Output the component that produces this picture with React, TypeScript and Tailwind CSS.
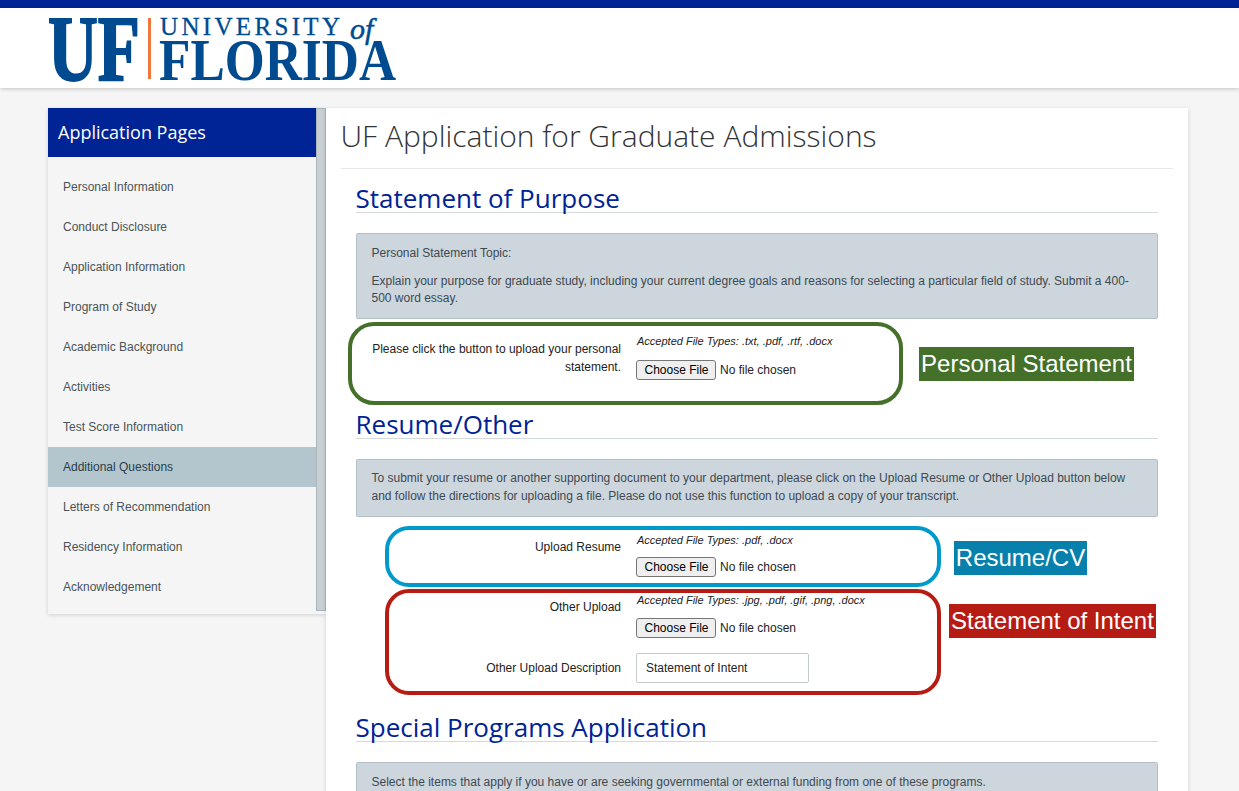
const items = ["Personal Information","Conduct Disclosure","Application Information","Program of Study","Academic Background","Activities","Test Score Information","Additional Questions","Letters of Recommendation","Residency Information","Acknowledgement"];

function Logo() {
  return (
    <svg width="350" height="68" viewBox="0 0 350 68" className="block overflow-visible">
      <text x="0" y="65" fontFamily="Liberation Serif" fontWeight="700" fontSize="94" fill="#004a8f" stroke="#004a8f" strokeWidth="2" textLength="92" lengthAdjust="spacingAndGlyphs">UF</text>
      <rect x="100" y="3" width="3" height="61" fill="#f3763c" />
      <text x="112" y="20" fontFamily="Liberation Serif" fontSize="25" fill="#004a8f" stroke="#004a8f" strokeWidth="0.3" textLength="180" lengthAdjust="spacing" fontWeight="400">UNIVERSITY</text>
      <text x="302" y="24" fontFamily="Liberation Serif" fontStyle="italic" fontWeight="400" fontSize="30" fill="#004a8f" stroke="#004a8f" strokeWidth="0.5">of</text>
      <text x="111" y="65" fontFamily="Liberation Serif" fontWeight="700" fontSize="59" fill="#004a8f" textLength="237" lengthAdjust="spacingAndGlyphs">FLORIDA</text>
    </svg>
  );
}

function Heading({ children, className }: { children: string; className: string }) {
  return <h2 className={`border-b border-[#d5dadd] font-['Open_Sans',sans-serif] text-[26px] leading-[30px] text-[#002395] -indent-[0.5px] ${className}`}>{children}</h2>;
}

function Picker() {
  return (
    <div className="flex items-center h-[20px] text-[12px] text-[#222]">
      <span className="w-[80px] h-[20px] flex items-center justify-center rounded-[3px] border border-[#767676] bg-[#efefef] pl-[1px] text-black">Choose File</span>
      <span className="ml-[4px]">No file chosen</span>
    </div>
  );
}

function Types({ children }: { children: string }) {
  return <div className="pl-[1px] text-[11px] leading-[14px] italic text-[#222]">{children}</div>;
}

function Label({ children, className }: { children: React.ReactNode; className?: string }) {
  return <div className={`w-[265px] mr-[15px] text-right text-[12px] leading-[18px] text-[#222] ${className ?? ""}`}>{children}</div>;
}

function Note({ text, bg, className }: { text: string; bg: string; className: string }) {
  return <div className={`absolute h-[34px] flex items-center justify-center text-white text-[24px] font-['Liberation_Sans',sans-serif] ${bg} ${className}`}>{text}</div>;
}

export default function App() {
  return (
    <div className="relative h-[791px] overflow-hidden bg-[#f5f5f5] font-['Liberation_Sans',Arial,sans-serif]">
      <div className="h-2 bg-[#002395]" />
      <header className="h-[80px] bg-white shadow-[0_1px_4px_rgba(0,0,0,0.2)] pl-[48px] pt-[7px]">
        <Logo />
      </header>
      <div className="flex items-start pl-[48px] pt-[20px]">
        <aside className="w-[278px] flex shadow-[0_1px_4px_rgba(0,0,0,0.15)] bg-[#f5f5f5] pb-[3px]">
          <div className="w-[268px] -mb-[3px]">
            <div className="h-[49px] bg-[#002395] pl-[10px] flex items-center text-white font-['Open_Sans',sans-serif] text-[18px]">Application Pages</div>
            <nav className="pt-[10px] pb-[7px]">
              {items.map((t) => (
                <div key={t} className={`h-10 pl-[15px] flex items-center text-[12px] ${t === "Additional Questions" ? "bg-[#b3c6ce] text-[#2a3c4a]" : "text-[#4a5355]"}`}>{t}</div>
              ))}
            </nav>
          </div>
          <div className="w-[10px] bg-[#c8d0d4] border border-[#a9b5ba]" />
        </aside>
        <main className="w-[862px] h-[700px] bg-white shadow-[0_1px_4px_rgba(0,0,0,0.15)] pl-[15px] pr-[15px] shrink-0">
          <h1 className="h-[61px] border-b border-[#e6e9ea] font-['Open_Sans',sans-serif] font-light text-[30px] leading-[55px] text-[#333] -indent-[0.5px]">UF Application for Graduate Admissions</h1>
          <div className="pl-[15px] pr-[15px]">
            <Heading className="h-[44px] pt-[14px] box-border">Statement of Purpose</Heading>
            <div className="mt-[20px] h-[86px] bg-[#cdd6dd] border border-[#b4c0c7] rounded-[2px] px-[14.5px] pt-[10px] text-[12px] leading-[18px] text-[#3d4a52]">
              <p>Personal Statement Topic:</p>
              <p className="mt-[11px] leading-[17px]">Explain your purpose for graduate study, including your current degree goals and reasons for selecting a particular field of study. Submit a 400-500 word essay.</p>
            </div>
            <div className="flex mt-[15px] h-[64px]">
              <Label className="pt-[6px]">Please click the button to upload your personal statement.</Label>
              <div>
                <Types>Accepted File Types: .txt, .pdf, .rtf, .docx</Types>
                <div className="mt-[12px]"><Picker /></div>
              </div>
            </div>
            <Heading className="h-[41px] pt-[11px] box-border">Resume/Other</Heading>
            <div className="mt-[20px] h-[58px] bg-[#cdd6dd] border border-[#b4c0c7] rounded-[2px] px-[14.5px] pt-[9px] text-[12px] leading-[18px] text-[#3d4a52]">
              <p>To submit your resume or another supporting document to your department, please click on the Upload Resume or Other Upload button below and follow the directions for uploading a file. Please do not use this function to upload a copy of your transcript.</p>
            </div>
            <div className="flex mt-[16px] h-[60px]">
              <Label className="pt-[5px]">Upload Resume</Label>
              <div>
                <Types>Accepted File Types: .pdf, .docx</Types>
                <div className="mt-[10px]"><Picker /></div>
              </div>
            </div>
            <div className="flex h-[46px]">
              <Label className="pt-[5px]">Other Upload</Label>
              <div>
                <Types>Accepted File Types: .jpg, .pdf, .gif, .png, .docx</Types>
                <div className="mt-[11px]"><Picker /></div>
              </div>
            </div>
            <div className="flex items-center h-[46px] mt-[6px]">
              <Label>Other Upload Description</Label>
              <div className="w-[173px] h-[30px] border border-[#c4c9cc] rounded-[2px] flex items-center pl-[9px] text-[12px] text-[#222]">Statement of Intent</div>
            </div>
            <Heading className="h-[41px] pt-[11px] box-border mt-[10px]">Special Programs Application</Heading>
            <div className="mt-[20px] h-[60px] bg-[#cdd6dd] border border-[#b4c0c7] rounded-[2px] px-[14.5px] pt-[10px] text-[12px] leading-[18px] text-[#3d4a52]">
              Select the items that apply if you have or are seeking governmental or external funding from one of these programs.
            </div>
          </div>
        </main>
      </div>
      <div className="absolute left-[348px] top-[322px] w-[555px] h-[83px] rounded-[26px] border-[4px] border-[#44702a]" />
      <div className="absolute left-[385px] top-[526px] w-[556px] h-[61px] rounded-[24px] border-[4px] border-[#0099cc]" />
      <div className="absolute left-[385px] top-[589px] w-[556px] h-[106px] rounded-[24px] border-[4px] border-[#b71c14]" />
      <Note text="Personal Statement" bg="bg-[#44702a]" className="left-[919px] top-[347px] w-[215px]" />
      <Note text="Resume/CV" bg="bg-[#0880ac]" className="left-[954px] top-[541px] w-[133px]" />
      <Note text="Statement of Intent" bg="bg-[#b71c14]" className="left-[949px] top-[604px] w-[207px]" />
    </div>
  );
}
